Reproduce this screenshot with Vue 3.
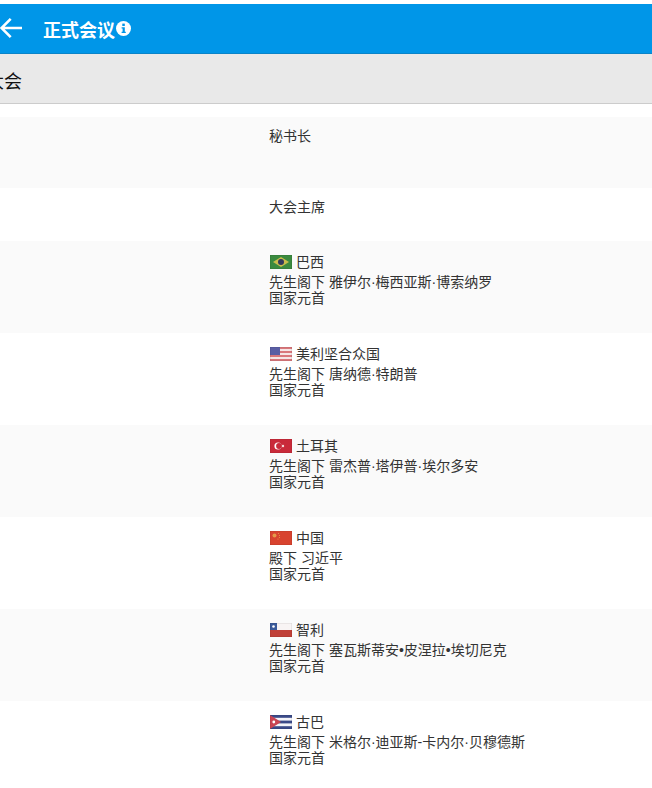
<template>
  <div class="page">
    <header class="topbar">
      <svg class="back" width="24" height="24" viewBox="0 0 24 24" aria-hidden="true">
        <path d="M23 12H3M11.7 2.8L2.5 12l9.2 9.2" fill="none" stroke="#fff" stroke-width="2.6" />
      </svg>
      <h1 class="title">正式会议</h1>
      <svg class="info" width="15" height="15" viewBox="0 0 15 15" aria-hidden="true">
        <circle cx="7.5" cy="7.5" r="7.5" fill="#fff" />
        <rect x="6.3" y="2.6" width="2.5" height="2.4" fill="#0096e8" />
        <path d="M5.6 6.2h3.2v4.6h1v1.3H5.6v-1.3h1v-3.3h-1z" fill="#0096e8" />
      </svg>
    </header>
    <div class="section"><span class="section-text">大会</span></div>
    <div class="rows">
      <div v-for="(r, i) in rows" :key="i" class="row" :class="[r.cls, { alt: i % 2 === 0 }]">
        <div class="cell">
          <div v-if="r.country" class="country">
            <svg class="flag" width="22" height="14" viewBox="0 0 22 14" aria-hidden="true">
              <template v-if="r.flag === 'br'">
                <rect width="22" height="14" fill="#3b8a3f" />
                <path d="M11 2l8 5-8 5-8-5z" fill="#c9bd4c" />
                <circle cx="11" cy="7" r="3" fill="#333a5c" />
              </template>
              <template v-else-if="r.flag === 'us'">
                <rect width="22" height="14" fill="#f6e6e6" />
                <rect width="22" height="2" fill="#d9787c" />
                <rect y="4" width="22" height="2" fill="#d9787c" />
                <rect y="8" width="22" height="2" fill="#d9787c" />
                <rect y="12" width="22" height="2" fill="#d9787c" />
                <rect width="10" height="8" fill="#5a5ea4" />
              </template>
              <template v-else-if="r.flag === 'tr'">
                <rect width="22" height="14" fill="#c92a3a" />
                <circle cx="8" cy="7" r="3.6" fill="#fff" />
                <circle cx="9" cy="7" r="2.9" fill="#c92a3a" />
                <circle cx="13" cy="7" r="1.2" fill="#f6dcdc" />
              </template>
              <template v-else-if="r.flag === 'cn'">
                <rect width="22" height="14" fill="#d8432f" />
                <circle cx="4.5" cy="4.5" r="2" fill="#e59a4a" />
                <circle cx="8.5" cy="2.5" r=".6" fill="#e59a4a" />
                <circle cx="9.5" cy="4.5" r=".6" fill="#e59a4a" />
                <circle cx="9.5" cy="6.5" r=".6" fill="#e59a4a" />
                <circle cx="8" cy="8" r=".6" fill="#e59a4a" />
              </template>
              <template v-else-if="r.flag === 'cl'">
                <rect width="22" height="7" fill="#f8f4f4" />
                <rect y="7" width="22" height="7" fill="#c04038" />
                <rect width="7" height="7" fill="#3b5a9a" />
                <circle cx="3.5" cy="3.5" r="1.3" fill="#fff" />
              </template>
              <template v-else>
                <rect width="22" height="14" fill="#f4f4f8" />
                <rect width="22" height="2.8" fill="#3a4a88" />
                <rect y="5.6" width="22" height="2.8" fill="#3a4a88" />
                <rect y="11.2" width="22" height="2.8" fill="#3a4a88" />
                <path d="M0 0l11 7-11 7z" fill="#c94452" />
                <circle cx="3.8" cy="7" r="1.4" fill="#fff" />
              </template>
              <rect width="22" height="14" fill="none" stroke="#000" stroke-opacity=".12" />
            </svg>
            <span>{{ r.country }}</span>
          </div>
          <div v-for="(l, j) in r.lines" :key="j" class="line">{{ l }}</div>
        </div>
      </div>
    </div>
  </div>
</template>

<script setup>
const rows = [
  { cls: 'short', lines: ['秘书长'] },
  { cls: 'mini', lines: ['大会主席'] },
  { flag: 'br', country: '巴西', lines: ['先生阁下 雅伊尔·梅西亚斯·博索纳罗', '国家元首'] },
  { flag: 'us', country: '美利坚合众国', lines: ['先生阁下 唐纳德·特朗普', '国家元首'] },
  { flag: 'tr', country: '土耳其', lines: ['先生阁下 雷杰普·塔伊普·埃尔多安', '国家元首'] },
  { flag: 'cn', country: '中国', lines: ['殿下 习近平', '国家元首'] },
  { flag: 'cl', country: '智利', lines: ['先生阁下 塞瓦斯蒂安•皮涅拉•埃切尼克', '国家元首'] },
  { flag: 'cu', country: '古巴', lines: ['先生阁下 米格尔·迪亚斯-卡内尔·贝穆德斯', '国家元首'] }
]
</script>

<style>
html, body { margin: 0; overflow: hidden; background: #fff; }
</style>

<style scoped>
.page {
  width: 652px;
  height: 788px;
  overflow: hidden;
  padding-top: 4px;
  box-sizing: border-box;
  font-family: "Liberation Sans", "Noto Sans CJK SC", sans-serif;
  color: #333;
  background: #fff;
}
.topbar {
  height: 49px;
  background: #0096e8;
  border-bottom: 1px solid #0a84c8;
  display: flex;
  align-items: center;
  color: #fff;
}
.back { margin-left: -1px; margin-top: -1px; }
.title {
  margin: 5px 0 0 20px;
  font-size: 18px;
  font-weight: 700;
  line-height: 40px;
  letter-spacing: 0;
}
.info { margin-left: 1px; margin-top: -1px; }
.section {
  height: 49px;
  background: #e9e9e9;
  border-bottom: 1px solid #ccc;
  display: flex;
  align-items: center;
  overflow: hidden;
}
.section-text {
  margin-left: -14px;
  font-size: 18px;
  color: #111;
  margin-top: 3px;
}
.rows { margin-top: 13px; }
.row {
  height: 92px;
  box-sizing: border-box;
  padding: 12px 0 0 269px;
  background: #fff;
}
.row.alt { background: #fafafa; }
.row.short { height: 71px; padding-top: 11px; }
.row.mini { height: 53px; padding-top: 11px; }
.cell { font-size: 14px; line-height: 17px; color: #333; }
.country {
  display: flex;
  align-items: center;
  gap: 4px;
  height: 18px;
  margin-bottom: 3px;
}
.flag { margin-left: 1px; flex: none; }
.line { height: 16px; }
</style>
